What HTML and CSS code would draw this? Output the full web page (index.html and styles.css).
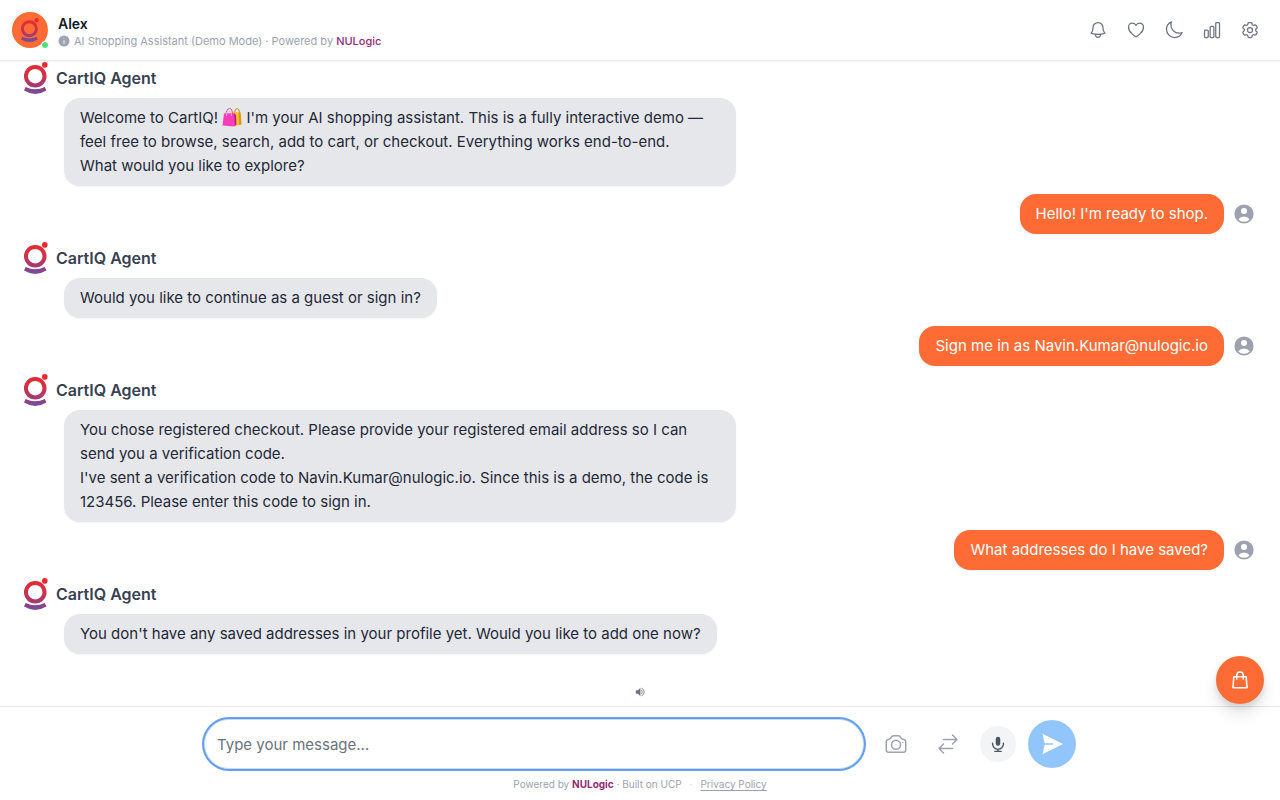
FILE: index.html
```html
<!DOCTYPE html>
<html lang="en">
  <head>
    <meta charset="UTF-8">
    <meta name="viewport" content="width=device-width, initial-scale=1">
    <title>CartIQ</title>
    <link rel="stylesheet" href="styles.css">
  </head>
  <body>
    <!-- shared symbols -->
    <svg class="sprite" aria-hidden="true">
      <defs>
        <linearGradient id="brand" gradientUnits="userSpaceOnUse" x1="0" y1="2" x2="0" y2="32">
          <stop offset="0" stop-color="#e62a30"/>
          <stop offset="0.4" stop-color="#cf3348"/>
          <stop offset="0.75" stop-color="#a03a76"/>
          <stop offset="1" stop-color="#6f4fa3"/>
        </linearGradient>
        <symbol id="logo" viewBox="0 0 24 32">
          <circle cx="11.2" cy="14.2" r="9.3" fill="none" stroke="url(#brand)" stroke-width="4"/>
          <circle cx="20.8" cy="2.9" r="2.8" fill="#e62a30"/>
          <path d="M1.6 25Q11.2 29.4 20.8 25L22.4 28.600Q11.2 35.400 0 28.600Z" fill="url(#brand)"/>
        </symbol>
        <symbol id="user" viewBox="0 0 20 20">
          <path d="M18 10a8 8 0 1 1-16 0 8 8 0 0 1 16 0Zm-5.500-2.500a2.500 2.500 0 1 1-5 0 2.500 2.500 0 0 1 5 0ZM10 12a5.990 5.990 0 0 0-4.793 2.390A6.480 6.480 0 0 0 10 16.500a6.480 6.480 0 0 0 4.793-2.110A5.990 5.990 0 0 0 10 12Z" fill-rule="evenodd" fill="currentColor"/>
        </symbol>
      </defs>
    </svg>

    <header class="header">
      <div class="avatar">
        <svg class="avatar-logo"><use href="#logo"/></svg>
        <span class="avatar-status"></span>
      </div>
      <div class="header-info">
        <h1 class="header-name">Alex</h1>
        <p class="header-sub">
          <svg class="info-icon" viewBox="0 0 12 12"><circle cx="6" cy="6" r="5.500" fill="#9ca3af"/><path d="M6 5.200V8.800M6 3.200V4.100" stroke="#e5e7eb" stroke-width="1.300"/></svg>
          <span>AI Shopping Assistant (Demo Mode) · Powered by <a class="brand" href="#">NULogic</a></span>
        </p>
      </div>
      <nav class="header-actions">
        <button type="button" aria-label="Notifications"><svg class="icon" viewBox="0 0 24 24"><path d="M14.857 17.082a23.848 23.848 0 0 0 5.454-1.310A8.967 8.967 0 0 1 18 9.750V9A6 6 0 0 0 6 9v.750a8.967 8.967 0 0 1-2.312 6.022c1.733.640 3.560 1.085 5.455 1.310m5.714 0a24.255 24.255 0 0 1-5.714 0m5.714 0a3 3 0 1 1-5.714 0"/></svg></button>
        <button type="button" aria-label="Wishlist"><svg class="icon" viewBox="0 0 24 24"><path d="M21 8.250c0-2.485-2.099-4.500-4.688-4.500-1.935 0-3.597 1.126-4.312 2.733-.715-1.607-2.377-2.733-4.313-2.733C5.100 3.750 3 5.765 3 8.250c0 7.220 9 12 9 12s9-4.780 9-12Z"/></svg></button>
        <button type="button" aria-label="Dark mode"><svg class="icon" viewBox="0 0 24 24"><path d="M21.752 15.002A9.720 9.720 0 0 1 18 15.750c-5.385 0-9.750-4.365-9.750-9.750 0-1.330.266-2.597.748-3.752A9.753 9.753 0 0 0 3 11.250C3 16.635 7.365 21 12.750 21a9.753 9.753 0 0 0 9.002-5.998Z"/></svg></button>
        <button type="button" aria-label="Analytics"><svg class="icon" viewBox="0 0 24 24"><path d="M3 13.125C3 12.504 3.504 12 4.125 12h2.250c.621 0 1.125.504 1.125 1.125v6.750C7.500 20.496 6.996 21 6.375 21h-2.250A1.125 1.125 0 0 1 3 19.875v-6.750ZM9.750 8.625c0-.621.504-1.125 1.125-1.125h2.250c.621 0 1.125.504 1.125 1.125v11.250c0 .621-.504 1.125-1.125 1.125h-2.250a1.125 1.125 0 0 1-1.125-1.125V8.625ZM16.500 4.125c0-.621.504-1.125 1.125-1.125h2.250C20.496 3 21 3.504 21 4.125v15.750c0 .621-.504 1.125-1.125 1.125h-2.250a1.125 1.125 0 0 1-1.125-1.125V4.125Z"/></svg></button>
        <button type="button" aria-label="Settings"><svg class="icon" viewBox="0 0 24 24"><path d="M9.594 3.940c.090-.542.560-.940 1.110-.940h2.593c.550 0 1.020.398 1.110.940l.213 1.281c.063.374.313.686.645.870.074.040.147.083.220.127.325.196.720.257 1.075.124l1.217-.456a1.125 1.125 0 0 1 1.370.490l1.296 2.247a1.125 1.125 0 0 1-.260 1.431l-1.003.827c-.293.241-.438.613-.430.992a7.723 7.723 0 0 1 0 .255c-.008.378.137.750.430.991l1.004.827c.424.350.534.955.260 1.430l-1.298 2.247a1.125 1.125 0 0 1-1.369.491l-1.217-.456c-.355-.133-.750-.072-1.076.124a6.470 6.470 0 0 1-.220.128c-.331.183-.581.495-.644.869l-.213 1.281c-.090.543-.560.940-1.110.940h-2.594c-.550 0-1.019-.398-1.110-.940l-.213-1.281c-.062-.374-.312-.686-.644-.870a6.520 6.520 0 0 1-.220-.127c-.325-.196-.720-.257-1.076-.124l-1.217.456a1.125 1.125 0 0 1-1.369-.490l-1.297-2.247a1.125 1.125 0 0 1 .260-1.431l1.004-.827c.292-.240.437-.613.430-.991a6.932 6.932 0 0 1 0-.255c.007-.380-.138-.751-.430-.992l-1.004-.827a1.125 1.125 0 0 1-.260-1.430l1.297-2.247a1.125 1.125 0 0 1 1.370-.491l1.216.456c.356.133.751.072 1.076-.124.072-.044.146-.086.220-.128.332-.183.582-.495.644-.869l.214-1.280Z"/><path d="M15 12a3 3 0 1 1-6 0 3 3 0 0 1 6 0Z"/></svg></button>
      </nav>
    </header>

    <main class="chat">
      <div class="messages">
        <div class="message">
          <div class="agent"><svg class="agent-logo"><use href="#logo"/></svg><span>CartIQ Agent</span></div>
          <div class="bubble">Welcome to CartIQ! <svg class="emoji" viewBox="0 0 20 20" aria-hidden="true"><path d="M12.500 6Q13 1 15.200 1.500T17.500 6" fill="none" stroke="#c98a20"/><path d="M10 4.500 18.500 5.500 19.500 17.500 13 19Z" fill="#fcc52e"/><path d="M16.500 5.300 18.500 5.500 19.500 17.500 17 18Z" fill="#dc9418"/><path d="M4 8Q4.500 1.500 7.500 1.500T10.500 8" fill="none" stroke="#c9578a"/><path d="M2 6.500 12 6 12.500 19.500 .500 18.500Z" fill="#f83cbc"/><path d="M12 6 14 8 14.500 17.500 12.500 19.500Z" fill="#b71c80"/><path d="M4.500 9Q4.500 4 7 4T9.500 9" fill="none" stroke="#ffb1d9"/></svg> I'm your AI shopping assistant. This is a fully interactive demo — feel free to browse, search, add to cart, or checkout. Everything works end-to-end.<br>What would you like to explore?</div>
        </div>
        <div class="message message--user">
          <div class="bubble">Hello! I'm ready to shop.</div>
          <svg class="user-icon"><use href="#user"/></svg>
        </div>
        <div class="message">
          <div class="agent"><svg class="agent-logo"><use href="#logo"/></svg><span>CartIQ Agent</span></div>
          <div class="bubble">Would you like to continue as a guest or sign in?</div>
        </div>
        <div class="message message--user">
          <div class="bubble">Sign me in as Navin.Kumar@nulogic.io</div>
          <svg class="user-icon"><use href="#user"/></svg>
        </div>
        <div class="message">
          <div class="agent"><svg class="agent-logo"><use href="#logo"/></svg><span>CartIQ Agent</span></div>
          <div class="bubble">You chose registered checkout. Please provide your registered email address so I can send you a verification code.<br>I've sent a verification code to Navin.Kumar@nulogic.io. Since this is a demo, the code is 123456. Please enter this code to sign in.</div>
        </div>
        <div class="message message--user">
          <div class="bubble">What addresses do I have saved?</div>
          <svg class="user-icon"><use href="#user"/></svg>
        </div>
        <div class="message">
          <div class="agent"><svg class="agent-logo"><use href="#logo"/></svg><span>CartIQ Agent</span></div>
          <div class="bubble">You don't have any saved addresses in your profile yet. Would you like to add one now?</div>
        </div>
      </div>
      <button class="speaker" type="button" aria-label="Mute voice">
        <svg viewBox="0 0 24 24"><path d="M2 8v8h5l6 6V2L7 8Z" fill="currentColor"/><path d="M15.500 7.500q4 4.500 0 9M16 3q6 2 6 9t-6 9" fill="none" stroke="currentColor" stroke-width="2"/></svg>
      </button>
    </main>

    <footer class="footer">
      <form class="composer">
        <input class="composer-input" type="text" placeholder="Type your message..." aria-label="Message">
        <button class="tool" type="button" aria-label="Upload a photo"><svg class="icon icon--lg" viewBox="0 0 24 24"><path d="M6.827 6.175A2.310 2.310 0 0 1 5.186 7.230c-.380.054-.757.112-1.134.175C2.999 7.580 2.250 8.507 2.250 9.574V18a2.250 2.250 0 0 0 2.250 2.250h15A2.250 2.250 0 0 0 21.750 18V9.574c0-1.067-.750-1.994-1.802-2.169a47.865 47.865 0 0 0-1.134-.175 2.310 2.310 0 0 1-1.640-1.055l-.822-1.316a2.192 2.192 0 0 0-1.736-1.039 48.774 48.774 0 0 0-5.232 0 2.192 2.192 0 0 0-1.736 1.039l-.821 1.316Z"/><path d="M16.500 12.750a4.500 4.500 0 1 1-9 0 4.500 4.500 0 0 1 9 0ZM18.750 10.500h.008v.008h-.008V10.500Z"/></svg></button>
        <button class="tool" type="button" aria-label="Compare"><svg class="icon icon--lg" viewBox="0 0 24 24"><path d="M7.500 21 3 16.500m0 0L7.500 12M3 16.500h13.500m0-13.500L21 7.500m0 0L16.500 12M21 7.500H7.500"/></svg></button>
        <button class="mic" type="button" aria-label="Voice input"><svg viewBox="0 0 20 20"><rect x="7.500" y="2" width="5" height="10" rx="2.500" fill="currentColor"/><path d="M4 9v1a6 6 0 0 0 12 0V9M10 16v2M6.500 18.200h7" fill="none" stroke="currentColor" stroke-width="1.500" stroke-linecap="round"/></svg></button>
        <button class="send" type="submit" aria-label="Send"><svg viewBox="0 0 24 24"><path d="M2.500 1.800 23 12 2.500 22.200 4.700 12.800H13V11.200H4.700Z" fill="#fff"/></svg></button>
      </form>
      <p class="legal">
        <span>Powered by <a class="brand brand--bold" href="#">NULogic</a> · Built on UCP</span>
        <span class="legal-dot">·</span>
        <a class="privacy" href="#">Privacy Policy</a>
      </p>
    </footer>

    <button class="cart" type="button" aria-label="Open cart">
      <svg viewBox="0 0 20 20"><path d="M3.800 6.800h12.400l.800 11H3ZM6.800 9V5.200a3.200 3.200 0 0 1 6.400 0V9" fill="none" stroke="#fff" stroke-width="1.600" stroke-linejoin="round" stroke-linecap="round"/></svg>
    </button>
  </body>
</html>
```
FILE: styles.css
```css
* {
  box-sizing: border-box;
}

body {
  margin: 0;
  display: flex;
  flex-direction: column;
  height: 100vh;
  overflow: hidden;
  background: #fff;
  color: #1f2937;
  font-family: Inter, "Liberation Sans", sans-serif;
  font-size: 15px;
  line-height: 24px;
}

h1,
p {
  margin: 0;
}

a {
  color: inherit;
  text-decoration: none;
}

button {
  display: flex;
  align-items: center;
  justify-content: center;
  flex-shrink: 0;
  padding: 0;
  border: 0;
  background: none;
  color: #6b7280;
  cursor: pointer;
}

.sprite {
  position: absolute;
  width: 0;
  height: 0;
}

.icon {
  width: 20px;
  height: 20px;
  fill: none;
  stroke: currentColor;
  stroke-width: 1.5;
  stroke-linecap: round;
  stroke-linejoin: round;
}

.icon--lg {
  width: 24px;
  height: 24px;
}

.brand {
  color: #932c77;
  font-weight: 500;
}

.brand--bold {
  font-weight: 700;
}

/* Header */

.header {
  display: flex;
  align-items: center;
  flex-shrink: 0;
  gap: 10px;
  padding: 12px;
  border-bottom: 1px solid #e5e7eb;
  box-shadow: 0 1px 2px rgba(0, 0, 0, 0.05);
}

.avatar {
  position: relative;
  display: flex;
  align-items: center;
  justify-content: center;
  width: 36px;
  height: 36px;
  border-radius: 50%;
  background: #ff6b35;
}

.avatar-logo {
  width: 18px;
  height: 24px;
}

.avatar-status {
  position: absolute;
  right: -1px;
  bottom: -1px;
  width: 8px;
  height: 8px;
  border: 1px solid #fff;
  border-radius: 50%;
  background: #4ade80;
}

.header-info {
  flex: 1;
  padding-top: 2px;
}

.header-name {
  color: #111827;
  font-size: 14px;
  font-weight: 600;
  line-height: 20px;
}

.header-sub {
  display: flex;
  align-items: center;
  gap: 4px;
  color: #9ca3af;
  font-size: 11px;
  line-height: 14px;
}

.info-icon {
  width: 12px;
  height: 12px;
}

.header-actions {
  display: flex;
  gap: 2px;
}

.header-actions button {
  width: 36px;
  height: 36px;
}

/* Conversation */

.chat {
  display: flex;
  flex: 1;
  flex-direction: column;
  justify-content: flex-end;
  align-items: center;
  min-height: 0;
  overflow: hidden;
}

.messages {
  display: flex;
  flex-direction: column;
  gap: 8px;
  width: 100%;
  padding: 0 24px;
}

.message {
  display: flex;
  flex-direction: column;
  align-items: flex-start;
  gap: 4px;
}

.message--user {
  flex-direction: row;
  align-items: center;
  justify-content: flex-end;
  gap: 8px;
}

.agent {
  display: flex;
  align-items: center;
  gap: 8px;
  color: #374151;
  font-size: 16px;
  font-weight: 600;
}

.agent-logo {
  width: 24px;
  height: 32px;
}

.bubble {
  max-width: 672px;
  margin-left: 40px;
  padding: 8px 16px;
  border-radius: 16px;
  background: #e5e7eb;
  box-shadow: 0 1px 2px rgba(0, 0, 0, 0.05);
}

.message--user .bubble {
  background: #ff6b35;
  color: #fff;
}

.user-icon {
  width: 24px;
  height: 24px;
  color: #9ca3af;
}

.emoji {
  width: 20px;
  height: 20px;
  vertical-align: -4px;
}

.speaker {
  height: 12px;
  margin: 32px 0 8px;
}

.speaker svg {
  width: 10px;
  height: 10px;
}

/* Message box */

.footer {
  flex-shrink: 0;
  padding: 12px 12px 8px;
  border-top: 1px solid #e5e7eb;
}

.composer {
  display: flex;
  align-items: center;
  gap: 12px;
  max-width: 872px;
  margin: 0 auto;
}

.composer-input {
  flex: 1;
  min-width: 0;
  height: 50px;
  padding: 0 12px;
  border: 1px solid #bfdbfe;
  border-radius: 25px;
  outline: 0;
  box-shadow: 0 0 0 2px #649eed;
  color: #1f2937;
  font: inherit;
}

.composer-input::placeholder {
  color: #6b7280;
}

.tool {
  width: 40px;
  height: 40px;
  color: #9ca3af;
}

.mic {
  width: 36px;
  height: 36px;
  border-radius: 50%;
  background: #f3f4f6;
  color: #4b5563;
}

.mic svg {
  width: 18px;
  height: 18px;
}

.send {
  width: 48px;
  height: 48px;
  border-radius: 50%;
  background: #93c5fd;
}

.send svg {
  width: 24px;
  height: 24px;
}

.legal {
  display: flex;
  justify-content: center;
  gap: 8px;
  margin-top: 8px;
  color: #9ca3af;
  font-size: 10px;
  line-height: 15px;
}

.legal-dot {
  color: #d1d5db;
}

.privacy {
  text-decoration: underline;
  text-underline-offset: 2px;
}

.cart {
  position: fixed;
  right: 16px;
  bottom: 96px;
  width: 48px;
  height: 48px;
  border-radius: 50%;
  background: #ff6b35;
  box-shadow: 0 10px 15px rgba(0, 0, 0, 0.1), 0 4px 6px rgba(0, 0, 0, 0.1);
}

.cart svg {
  width: 20px;
  height: 20px;
}
```
